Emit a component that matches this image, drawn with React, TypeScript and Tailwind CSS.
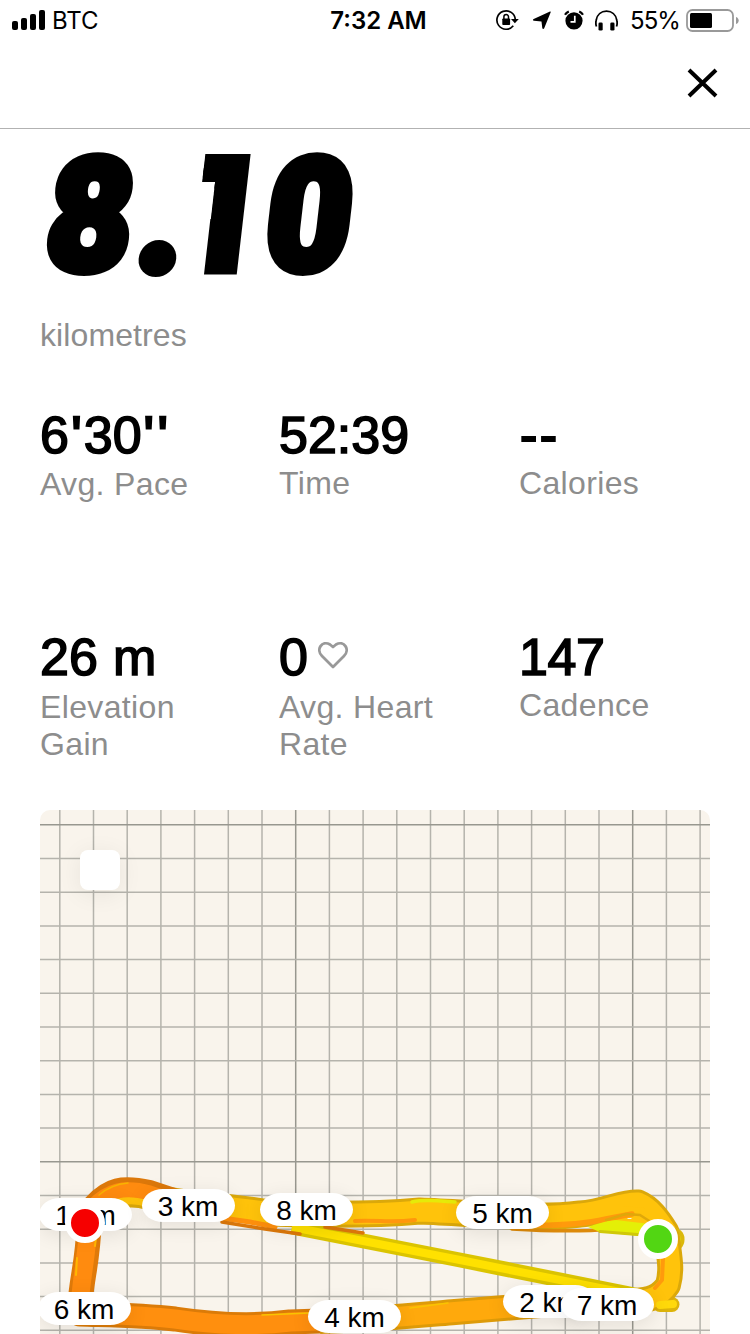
import { ReactNode } from "react";

type StatProps = {
    value: ReactNode;
    label: string;
    labelClass: string;
}

type Pill = {
    km: number;
    className: string;
}

const pills: Pill[] = [
    { km: 1, className: "-left-px top-[388px]" },
    { km: 3, className: "left-[101.5px] top-[379px]" },
    { km: 8, className: "left-[220px] top-[383px]" },
    { km: 5, className: "left-[416px] top-[386px]" },
    { km: 6, className: "-left-[2.5px] top-[482px]" },
    { km: 4, className: "left-[268px] top-[490px]" },
    { km: 2, className: "left-[463px] top-[475px]" },
    { km: 7, className: "left-[520.5px] top-[478px]" },
];

function StatusBar() {
    return (
        <div className="flex h-10 items-center justify-between pl-3 pr-[11px] font-[Inter,sans-serif] text-[24px] leading-10">
            <div className="flex w-[240px] items-center gap-[7px]">
                <svg width="33" height="20" viewBox="0 0 33 20">
                    <rect x="0" y="11" width="6" height="9" rx="2" />
                    <rect x="9" y="8" width="6" height="12" rx="2" />
                    <rect x="18" y="4" width="6" height="16" rx="2" />
                    <rect x="27" y="0" width="6" height="20" rx="2" />
                </svg>
                <span className="pt-[2px] tracking-[-0.1px]">BTC</span>
            </div>
            <span className="pl-[9px] pt-[2px] font-semibold">7:32 AM</span>
            <div className="flex w-[243px] items-center justify-end">
                {/* rotation lock */}
                <svg width="23" height="22" viewBox="0 0 23 22" className="mr-[13px]">
                    <path d="M17.3 16.8A9.2 9.2 0 1 1 19.3 10.5" fill="none" stroke="#000" strokeWidth="1.7" />
                    <path d="M15 10h7.8l-3.9 4.3z" />
                    <rect x="6.3" y="9.5" width="7.8" height="6.5" rx=".8" />
                    <path d="M7.9 10V7.8a2.3 2.3 0 0 1 4.6 0V10" fill="none" stroke="#000" strokeWidth="1.5" />
                </svg>
                {/* location */}
                <svg width="20" height="19" viewBox="0 0 20 19" className="mr-[12px]">
                    <path d="M18.7 1.2 12.2 17.2c-.5 1.2-1.7 1-1.9-.2L9.5 10.5 2 9.8C.7 9.6.6 8.5 1.7 8L17.5.7c1-.5 1.5-.2 1.2.5z" />
                </svg>
                {/* alarm */}
                <svg width="20" height="20" viewBox="0 0 20 20" className="mr-[11px]">
                    <circle cx="10" cy="10.8" r="8.6" />
                    <path d="M1 4.8A8 8 0 0 1 4.8 1.4M19 4.8A8 8 0 0 0 15.2 1.4" fill="none" stroke="#000" strokeWidth="2.2" />
                    <path d="M10.8 5.8v6H6.5" fill="none" stroke="#fff" strokeWidth="1.7" />
                </svg>
                {/* headphones */}
                <svg width="23" height="21" viewBox="0 0 23 21" className="mr-[12px]">
                    <path d="M1.5 16.5c-.8-2-.7-4.6-.4-6C2 4.5 6.3 1.2 11.5 1.2s9.5 3.3 10.4 9.3c.3 1.4.4 4-.4 6" fill="none" stroke="#000" strokeWidth="1.8" />
                    <rect x="3.5" y="12.5" width="4.2" height="8" rx="1.3" />
                    <rect x="15.3" y="12.5" width="4.2" height="8" rx="1.3" />
                </svg>
                <span className="mr-[6px] pt-[2px] tracking-[-0.9px]">55%</span>
                <svg width="53" height="23" viewBox="0 0 53 23" className="shrink-0">
                    <rect x="1" y="1" width="46" height="21" rx="5.5" fill="none" stroke="#999" strokeWidth="1.8" />
                    <rect x="4" y="4" width="22" height="15" rx="1.5" />
                    <path d="M50 8c3.6 1 3.6 6 0 7z" fill="#999" />
                </svg>
            </div>
        </div>
    )
}

function Stat({ value, label, labelClass }: StatProps) {
    return (
        <div>
            <div className="flex h-[52px] text-[52px] leading-[52px] [-webkit-text-stroke:1.6px_#000]">{value}</div>
            <p className={"w-[200px] text-[32px] leading-[37px] tracking-[0.35px] text-[#8d8d8d] " + labelClass}>{label}</p>
        </div>
    )
}

function Route() {
    return (
        <svg width="670" height="524" viewBox="40 810 670 524" className="block" fill="none" strokeLinecap="round" strokeLinejoin="round">
            {Array.from({ length: 20 }, (_, i) => (
                <path
                    key={"v" + i}
                    d={`M${59.8 + i * 33.7} 810v524`}
                    stroke={i % 10 === 7 ? "#98978f" : "#b5b3ac"}
                    strokeWidth="1.5"
                />
            ))}
            {Array.from({ length: 16 }, (_, i) => (
                <path
                    key={"h" + i}
                    d={`M40 ${824.8 + i * 33.7}h670`}
                    stroke={i % 10 === 0 ? "#98978f" : "#b5b3ac"}
                    strokeWidth="1.5"
                />
            ))}

            {/* lower side */}
            <path d="M80 1314C110 1315 140 1315 175 1319C215 1325 250 1327 290 1322L320 1321" stroke="#db7b08" strokeWidth="25" />
            <path d="M320 1321C370 1320 420 1315 455 1312L540 1305" stroke="#de9b08" strokeWidth="26" strokeLinecap="butt" />
            <path d="M80 1314C110 1315 140 1315 175 1319C215 1325 250 1327 290 1322L320 1321" stroke="#ff8f0e" strokeWidth="19" />
            <path d="M320 1321C370 1320 420 1315 455 1312L540 1305" stroke="#ffa90c" strokeWidth="20" strokeLinecap="butt" />
            <path d="M262 1315 310 1313M410 1308 448 1303" stroke="#f9c400" strokeWidth="1.5" />

            {/* left side */}
            <path d="M80 1306C81 1280 88 1262 89 1224" stroke="#df7a0a" strokeWidth="25" />
            <path d="M79.5 1306C81 1280 87 1255 88.5 1224" stroke="#ff8b0f" strokeWidth="18" />
            <path d="M77 1258 76 1275M96 1238 95 1246" stroke="#ffb800" strokeWidth="2" />

            {/* upper side */}
            <path d="M92 1218C106 1194 128 1190 150 1197C190 1206 230 1206 270 1213C325 1215 375 1215 420 1211C475 1213 535 1220 580 1214C606 1212 622 1202 638 1203C650 1208 658 1219 666 1232" stroke="#dba80a" strokeWidth="27" />
            <path d="M92 1218C106 1194 128 1190 150 1197C190 1206 230 1206 270 1213C325 1215 375 1215 420 1211C475 1213 535 1220 580 1214C606 1212 622 1202 638 1203C650 1208 658 1219 666 1232" stroke="#ffc30b" strokeWidth="21" />
            <path d="M92 1204C108 1186 122 1183 150 1189L174 1197" stroke="#dc780a" strokeWidth="18" strokeLinecap="butt" />
            <path d="M92 1207C108 1190 124 1186 150 1193L174 1201" stroke="#ff8b0f" strokeWidth="15" strokeLinecap="butt" />
            <path d="M99 1195C108 1187 117 1184 128 1183" stroke="#f8b400" strokeWidth="1.5" />
            <path d="M222 1218 250 1222 275 1227" stroke="#ff900d" strokeWidth="5" />
            <path d="M355 1221C380 1220 390 1223 415 1220" stroke="#ff970c" strokeWidth="4" />
            <path d="M412 1202C425 1199 440 1201 455 1202" stroke="#e6ea08" strokeWidth="3.5" />

            {/* diagonal shortcut */}
            <path d="M292 1227 460 1260 620 1292 640 1296" stroke="#dbc400" strokeWidth="15" strokeLinecap="butt" />
            <path d="M292 1227 460 1260 620 1292 640 1296" stroke="#ffe100" strokeWidth="8" strokeLinecap="butt" />
            <path d="M222 1222 265 1229 300 1234M325 1227 363 1233" stroke="#dc780a" strokeWidth="3.5" />

            {/* strands meeting at the start point */}
            <path d="M600 1224 622 1206 644 1208 662 1230 640 1228z" fill="#ffc30b" />
            <path d="M512 1229C545 1231 580 1232 612 1229" stroke="#dd8a0b" strokeWidth="3.5" />
            <path d="M520 1225C552 1226 580 1225 606 1219L632 1214" stroke="#ff9a0c" strokeWidth="5.5" />
            <path d="M588 1227C600 1223 606 1221 616 1220L650 1224V1237L600 1232z" fill="#e4ef07" />
            <path d="M600 1231.5 650 1235.5" stroke="#d0c808" strokeWidth="3" />
            <path d="M606 1220 626 1214 640 1215 654 1224" stroke="#dfa80a" strokeWidth="2.5" />
            <path d="M628 1218.5h3" stroke="#fff8df" strokeWidth="1.2" />

            {/* right side */}
            <path d="M660 1304.5H672" stroke="#ddb40a" strokeWidth="15" />
            <path d="M673 1239v1" stroke="#dbb80a" strokeWidth="23" />
            <path d="M672 1239v1" stroke="#e4ef08" strokeWidth="17" />
            <path d="M667 1238C670 1261 672 1270 668 1285C660 1297 650 1300 635 1301" stroke="#dba80a" strokeWidth="26" />
            <path d="M667 1238C670 1261 672 1270 668 1285C660 1297 650 1300 635 1301" stroke="#ffc30b" strokeWidth="20" />
            <path d="M663 1258 662 1280 655 1288" stroke="#ff9a0c" strokeWidth="4" />
            <path d="M660 1305 673 1304" stroke="#ffd90a" strokeWidth="8" />
        </svg>
    )
}

function RunMap() {
    return (
        <div className="relative mx-10 h-[524px] overflow-hidden rounded-t-[10px] bg-[#f9f4ec]">
            <Route />
            <div className="absolute left-10 top-10 size-10 rounded-lg bg-white shadow-[0_4px_24px_rgba(0,0,0,0.07)]" />
            {pills.map((pill) => (
                <div
                    key={pill.km}
                    className={"absolute h-[33px] w-[93px] rounded-[21px/16.5px] bg-white text-center text-[28px] leading-[35px] shadow-[0_4px_20px_rgba(0,0,0,0.09)] " + pill.className}
                >
                    {pill.km} km
                </div>
            ))}
            <div className="absolute left-[25px] top-[393px] size-[40px] rounded-full border-[6px] border-white bg-[#f60000]" />
            <div className="absolute left-[598px] top-[409px] size-[40px] rounded-full border-[6px] border-white bg-[#52d613]" />
        </div>
    )
}

export default function App() {
    return (
        <div className="flex h-[1334px] w-[750px] flex-col overflow-hidden bg-white font-['Liberation_Sans',Arial,sans-serif] text-black">
            <StatusBar />
            <div className="flex h-[89px] items-center justify-end border-b border-[#b2b2b2] pr-8">
                <svg width="31" height="30" viewBox="0 0 31 30" className="-mt-[3px]">
                    <path d="M2 2 29 28M29 2 2 28" stroke="#000" strokeWidth="4" />
                </svg>
            </div>

            <div className="flex h-[188px] pl-[48px] font-[Roboto,sans-serif] text-[157px] font-black leading-[174px] [-webkit-text-stroke:9px_#000]">
                <span className="h-[174px] w-[90px] origin-left -skew-x-[7deg] scale-x-[0.94]">8</span>
                <span className="-mt-[7px] h-[174px] w-[41px] origin-left -skew-x-[5deg] pl-[5px] font-[Lato,sans-serif] [-webkit-text-stroke:12px_#000]">.</span>
                {/* the shadow and the clip give the 1 its square flag */}
                <span className="h-[174px] w-[88px] origin-left -skew-x-[7deg] scale-x-[0.94] [clip-path:polygon(20.4px_25px,100px_25px,100px_148px,30px_148px,30px_90px,34.2px_90px,34.2px_53px,20.4px_53px)] [text-shadow:0_-20px_0_#000]">1</span>
                <span className="h-[174px] w-[94px] origin-left -skew-x-[7deg] scale-x-[0.94]">0</span>
            </div>
            <p className="h-[92px] pl-10 text-[32px] leading-[37px] tracking-[0.1px] text-[#8d8d8d]">kilometres</p>

            <div className="grid h-[222px] grid-cols-[239px_240px_191px] pl-10">
                <Stat
                    value={
                        <span>
                            6<span className="mx-[2.5px] [-webkit-text-stroke:2.5px_#000]">'</span>30
                            <span className="ml-[2px] tracking-[4px] [-webkit-text-stroke:2.5px_#000]">''</span>
                        </span>
                    }
                    label="Avg. Pace"
                    labelClass="mt-[5px]"
                />
                <Stat value="52:39" label="Time" labelClass="mt-[4px]" />
                <Stat value={<span className="pl-px tracking-[2.5px] [-webkit-text-stroke:2px_#000]">--</span>} label="Calories" labelClass="mt-[4px]" />
            </div>
            <div className="grid h-[179px] grid-cols-[239px_240px_191px] pl-10">
                <Stat value={<span className="tracking-[0.2px]">26 m</span>} label="Elevation Gain" labelClass="mt-[6px]" />
                <Stat
                    value={
                        <>
                            0
                            <svg width="30" height="28" viewBox="0 0 30 28" className="ml-[10px] mt-[10px]">
                                <path d="M15 26 4 15C-2.5 8.500 4-1 12 3.500l3 2.500L18 3.500c8-4.500 14.500 5 8 11.500z" fill="none" stroke="#999" strokeWidth="2.8" strokeLinejoin="round" />
                            </svg>
                        </>
                    }
                    label="Avg. Heart Rate"
                    labelClass="mt-[6px]"
                />
                <Stat value={<span className="tracking-[-0.4px]">147</span>} label="Cadence" labelClass="mt-[4px]" />
            </div>

            <RunMap />
        </div>
    )
}
